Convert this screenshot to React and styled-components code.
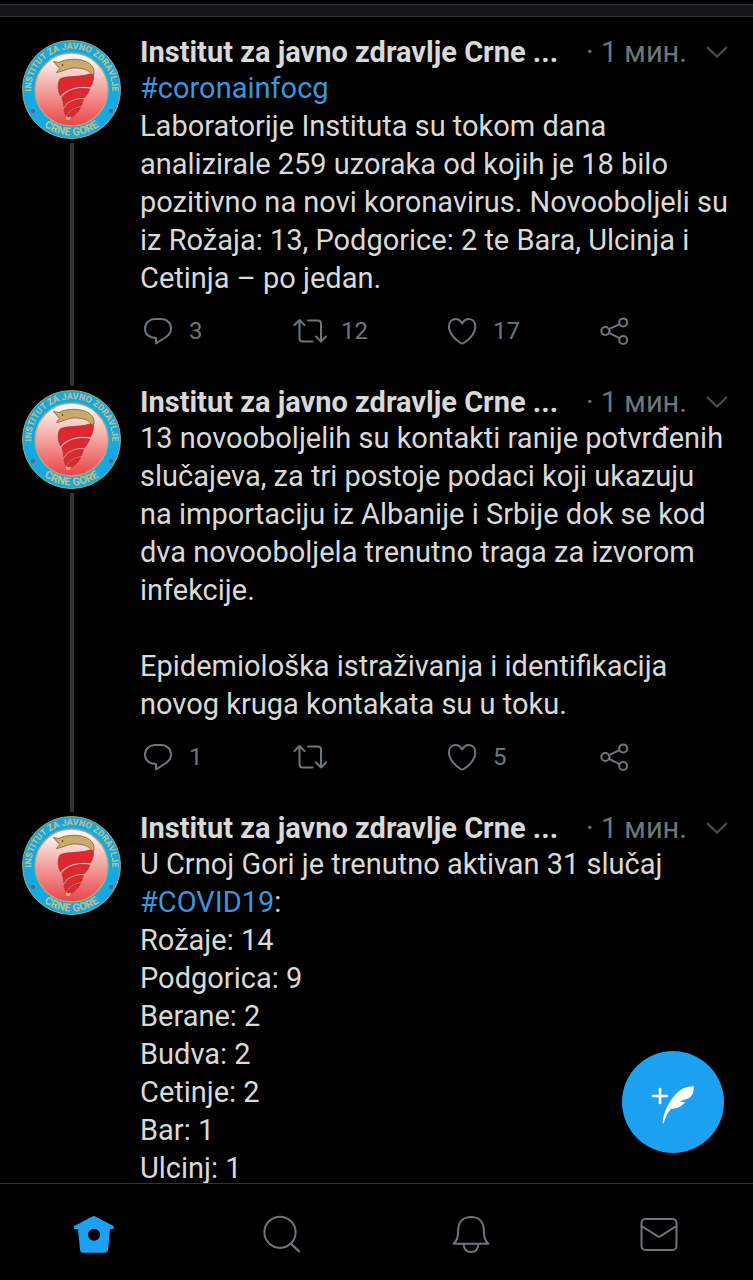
import React from 'react';
import styled, { createGlobalStyle } from 'styled-components';

const GlobalStyle = createGlobalStyle`
  * {
    box-sizing: border-box;
  }
  body {
    margin: 0;
    background: #000000;
    color: #d9d9d9;
    font-family: Roboto, "Liberation Sans", sans-serif;
  }
`;

const Layout = styled.div`
  display: flex;
  flex-direction: column;
  height: 100vh;
  overflow: hidden;
`;

const TopStrip = styled.header`
  flex: none;
  height: 13px;
  margin-top: 4px;
  background: #14171a;
  border-top: 1px solid #2f3336;
  border-bottom: 1px solid #2f3336;
`;

const Feed = styled.main`
  flex: 1;
  min-height: 0;
  overflow: hidden;
  padding-top: 19px;
`;

const TweetRow = styled.article`
  display: flex;
`;

const Rail = styled.div`
  flex: none;
  display: flex;
  flex-direction: column;
  gap: 4px;
  width: 100px;
  margin: 0 18px 0 22px;
  padding-top: 4px;
  > svg {
    flex: none;
  }
`;

const Thread = styled.div`
  flex: 1;
  width: 4px;
  margin-left: 48px;
  background: #2f3336;
`;

const Content = styled.div`
  flex: 1;
  min-width: 0;
`;

const TweetHead = styled.div`
  display: flex;
  align-items: center;
  height: 32px;
  margin-bottom: 1px;
  padding-right: 25px;
`;

const Name = styled.h2`
  flex: 1;
  margin: 0;
  font-size: 29px;
  line-height: 32px;
  font-weight: 700;
  white-space: nowrap;
`;

const Time = styled.span`
  color: #6e767d;
  font-size: 29px;
  line-height: 32px;
  white-space: nowrap;
`;

const IconButton = styled.button`
  display: flex;
  align-items: center;
  padding: 0;
  border: 0;
  background: none;
  color: #6e767d;
  font: inherit;
`;

const MoreButton = styled(IconButton)`
  margin-left: 19px;
`;

const Body = styled.div`
  padding-right: 16px;
  font-size: 29px;
  line-height: 38px;
`;

const Line = styled.p`
  min-height: 38px;
  margin: 0;
`;

const Hashtag = styled.a`
  color: #3a96dd;
  text-decoration: none;
`;

const Actions = styled.div`
  display: grid;
  grid-template-columns: repeat(4, 1fr);
  height: 68px;
  margin-bottom: 21px;
  padding-right: 5px;
`;

const Action = styled(IconButton)`
  gap: 13px;
  font-size: 24px;
  line-height: 28px;
`;

const Compose = styled.button`
  position: absolute;
  right: 29px;
  bottom: 127px;
  display: flex;
  align-items: center;
  justify-content: center;
  width: 102px;
  height: 102px;
  padding: 0;
  border: 0;
  border-radius: 50%;
  background: #1da1f2;
  color: #ffffff;
`;

const TabBar = styled.nav`
  flex: none;
  display: grid;
  grid-template-columns: repeat(4, 1fr);
  height: 97px;
  padding-top: 4px;
  border-top: 1px solid #2f3336;
`;

const Tab = styled.a`
  display: flex;
  align-items: center;
  justify-content: center;
  color: ${props => (props.$active ? '#1da1f2' : '#6e767d')};
`;

const Icon = ({ size = 36, children }) => (
  <svg
    width={size}
    height={size}
    viewBox={`0 0 ${size} ${size}`}
    fill="none"
    stroke="currentColor"
    strokeWidth="2"
    strokeLinecap="round"
    strokeLinejoin="round"
    aria-hidden="true"
  >
    {children}
  </svg>
);

const ReplyIcon = () => (
  <Icon>
    <path d="M16 30.5V25C9 25 5 21 5 15.5C5 10 9.5 6 15 6H21C27 6 31 10 31 15.5C31 19.5 29 22 26 24Z" />
  </Icon>
);

const RetweetIcon = () => (
  <Icon>
    <path d="M2.5 12L7.5 7L12.5 12M7.5 7.5V25.5Q7.5 28.5 10.5 28.5H20.5" />
    <path d="M16 7.5H26Q29 7.5 29 10.5V28.5M24 23.5L29 28.5L34 23.5" />
  </Icon>
);

const HeartIcon = () => (
  <Icon>
    <path d="M18.2 10.5C16.5 7.5 14.2 6 11.5 6C7.5 6 5 9.3 5 13.5C5 21 12.5 27.5 16.6 30Q18.2 31 19.8 30C24 27.5 31.3 21 31.3 13.5C31.3 9.3 28.8 6 24.8 6C22.2 6 19.9 7.5 18.2 10.5Z" />
  </Icon>
);

const ShareIcon = () => (
  <Icon>
    <circle cx="9.3" cy="18" r="4" />
    <circle cx="27.2" cy="9.4" r="4" />
    <circle cx="27.2" cy="27" r="4" />
    <path d="M13 16.2L23.5 11.2M13 19.8L23.5 25.2" />
  </Icon>
);

const ChevronIcon = () => (
  <svg width="22" height="22" viewBox="0 0 22 22" fill="none" stroke="#4b5054" strokeWidth="2" aria-hidden="true">
    <path d="M1 6L11 15.5L21 6" />
  </svg>
);

const HomeIcon = () => (
  <Icon size={44}>
    <path
      d="M21.8 3.7L41.5 14Q42.5 17 41 17H38L36 37.5Q35.7 40.7 32.5 40.7H11.5Q8.4 40.7 8 37.5L6 17H3Q1.2 17 2.2 14ZM22 16.7A6 6 0 1 0 22 28.7A6 6 0 1 0 22 16.7Z"
      fill="currentColor"
      fillRule="evenodd"
      stroke="none"
    />
  </Icon>
);

const SearchIcon = () => (
  <Icon size={44}>
    <circle cx="20" cy="20.3" r="15.6" />
    <path d="M31.3 32L39 39.3" strokeWidth="2.4" />
  </Icon>
);

const BellIcon = () => (
  <Icon size={44}>
    <path d="M4.5 31.8C8 28.5 9 26 9.2 17.5C9.5 9.5 14.5 5 22 5C29.5 5 34.5 9.5 34.8 17.5C35 26 36 28.5 39.5 31.8Z" />
    <path d="M14.6 32.5C15 37.3 18 40 22 40C26 40 29 37.3 29.4 32.5" />
  </Icon>
);

const MailIcon = () => (
  <Icon size={44}>
    <rect x="4.5" y="7" width="35" height="31" rx="4" />
    <path d="M4.5 14L20.5 24.2Q22 25.2 23.5 24.2L39.5 14" />
  </Icon>
);

const ComposeIcon = () => (
  <Icon size={60}>
    <path d="M17 17V31M10 24H24" strokeWidth="2.6" />
    <path
      d="M19.7 51.3C20 41 26 28 35.3 19.7C40 15.7 45 14.3 50.7 14.3C51 20 49.5 23.5 47 25.4C44 27.5 40 27 37 29.5L42 30.3C39 34.5 33 37 28 36.8C24 41.5 22 46 20.8 51.3Z"
      fill="currentColor"
      stroke="none"
    />
  </Icon>
);

const Avatar = ({ id }) => (
  <svg width="99" height="99" viewBox="0 0 99 99" role="img" aria-label="Institut za javno zdravlje Crne Gore">
    <defs>
      <linearGradient id={`${id}-sky`} x1="0" y1="0" x2="0" y2="1">
        <stop offset="0.08" stopColor="#fdf3ee" />
        <stop offset="0.5" stopColor="#f4a3a1" />
        <stop offset="1" stopColor="#ec4247" />
      </linearGradient>
      <path id={`${id}-top`} d="M11.8 64A40.4 40.4 0 1 1 87.2 64" />
      <path id={`${id}-bottom`} d="M3.5 49.5A46 46 0 0 0 95.5 49.5" />
    </defs>
    <circle cx="49.5" cy="49.5" r="49" fill="#14a9e2" stroke="#a9a66f" />
    <circle cx="49.5" cy="49.5" r="36.5" fill={`url(#${id}-sky)`} stroke="#b9a878" strokeWidth="1.4" />
    <g fill="#c3c088" fontFamily="Roboto" fontWeight="700" textAnchor="middle">
      <text fontSize="9">
        <textPath href={`#${id}-top`} startOffset="50%">INSTITUT ZA JAVNO ZDRAVLJE</textPath>
      </text>
      <text fontSize="11">
        <textPath href={`#${id}-bottom`} startOffset="50%">CRNE GORE</textPath>
      </text>
    </g>
    <circle cx="11" cy="71" r="2" fill="#6a5a7c" />
    <circle cx="89" cy="71" r="2" fill="#6a5a7c" />
    <g fill="#e0262e" stroke="#8f3a38" strokeWidth="0.7" strokeLinejoin="round">
      <path d="M38 39C45 35 61 38 71.5 32.5C72 38 71 43 68.5 47C57 45 44 48 38.5 56C35.5 50 35.5 43 38 39Z" />
      <path d="M40 57.5C46 49 58 47.5 67.8 49C66.5 52.5 64.5 55.5 62.5 57.5C54 57 46 60 41.5 66.5C42 63 40.5 60.5 40 57.5Z" />
      <path d="M42.2 69C46 61.5 54 59 61.5 59.5C60.5 61.5 60 63.5 59.5 65.5C53 66.5 47.5 69.5 44 75.5C42.5 73.5 42 71.5 42.2 69Z" />
      <path d="M45 76.5C48 71 53 68 58.5 67.5C57 71.5 53.5 74 50.5 77Z" />
    </g>
    <path
      d="M31.5 21.5L37 22.5C43 19 54 18.5 61 20.5C68 22.5 73 27 72 34L69.5 34.5C67 29.5 61 28.5 54 28C46 27.5 42 31.5 34.5 32.5L37.5 28.5Z"
      fill="#c9aa6a"
      stroke="#7c6238"
      strokeWidth="0.8"
    />
    <circle cx="40.5" cy="25" r="0.8" fill="#3e3420" />
    <path d="M44 76L46.5 77.5L49 76.5L47.5 80L44.5 80Z" fill="#e0b36c" />
  </svg>
);

const tweets = [
  {
    id: 'lab',
    lines: [
      '#coronainfocg',
      'Laboratorije Instituta su tokom dana',
      'analizirale 259 uzoraka od kojih je 18 bilo',
      'pozitivno na novi koronavirus. Novooboljeli su',
      'iz Rožaja: 13, Podgorice: 2 te Bara, Ulcinja i',
      'Cetinja – po jedan.',
    ],
    replies: 3,
    retweets: 12,
    likes: 17,
  },
  {
    id: 'contacts',
    lines: [
      '13 novooboljelih su kontakti ranije potvrđenih',
      'slučajeva, za tri postoje podaci koji ukazuju',
      'na importaciju iz Albanije i Srbije dok se kod',
      'dva novooboljela trenutno traga za izvorom',
      'infekcije.',
      '',
      'Epidemiološka istraživanja i identifikacija',
      'novog kruga kontakata su u toku.',
    ],
    replies: 1,
    likes: 5,
  },
  {
    id: 'active',
    last: true,
    lines: [
      'U Crnoj Gori je trenutno aktivan 31 slučaj',
      '#COVID19:',
      'Rožaje: 14',
      'Podgorica: 9',
      'Berane: 2',
      'Budva: 2',
      'Cetinje: 2',
      'Bar: 1',
      'Ulcinj: 1',
    ],
  },
];

const withHashtags = line =>
  line.split(/(#\w+)/).filter(Boolean).map(part =>
    (part[0] === '#' ? <Hashtag key={part} href={part}>{part}</Hashtag> : part));

const Tweet = ({ tweet }) => (
  <TweetRow>
    <Rail>
      <Avatar id={tweet.id} />
      {!tweet.last && <Thread />}
    </Rail>
    <Content>
      <TweetHead>
        <Name>Institut za javno zdravlje Crne ...</Name>
        <Time>· 1 мин.</Time>
        <MoreButton aria-label="More">
          <ChevronIcon />
        </MoreButton>
      </TweetHead>
      <Body>
        {tweet.lines.map((line, i) => (
          <Line key={i}>{withHashtags(line)}</Line>
        ))}
      </Body>
      {!tweet.last && (
        <Actions>
          <Action aria-label="Reply">
            <ReplyIcon />
            {tweet.replies}
          </Action>
          <Action aria-label="Retweet">
            <RetweetIcon />
            {tweet.retweets}
          </Action>
          <Action aria-label="Like">
            <HeartIcon />
            {tweet.likes}
          </Action>
          <Action aria-label="Share">
            <ShareIcon />
          </Action>
        </Actions>
      )}
    </Content>
  </TweetRow>
);

const App = () => (
  <Layout>
    <GlobalStyle />
    <TopStrip />
    <Feed>
      {tweets.map(tweet => (
        <Tweet key={tweet.id} tweet={tweet} />
      ))}
    </Feed>
    <Compose aria-label="Compose">
      <ComposeIcon />
    </Compose>
    <TabBar>
      <Tab href="#home" aria-label="Home" $active>
        <HomeIcon />
      </Tab>
      <Tab href="#search" aria-label="Search">
        <SearchIcon />
      </Tab>
      <Tab href="#notifications" aria-label="Notifications">
        <BellIcon />
      </Tab>
      <Tab href="#messages" aria-label="Messages">
        <MailIcon />
      </Tab>
    </TabBar>
  </Layout>
);

export default App;
